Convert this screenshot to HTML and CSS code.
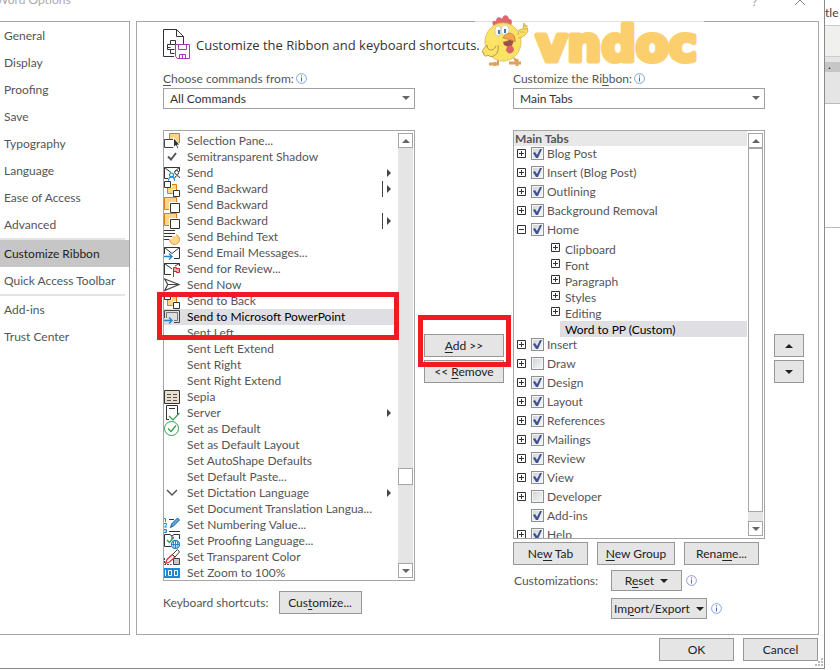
FILE: index.html
```html
<!DOCTYPE html>
<html lang="en">
<head>
<meta charset="utf-8">
<title>Word Options</title>
<link rel="stylesheet" href="styles.css">
</head>
<body>
<svg class="defs" aria-hidden="true">
  <symbol id="info" viewBox="0 0 11 11"><circle cx="5.500" cy="5.500" r="4.900" fill="#fff" stroke="#7fa3dc"/><path d="M5.500 4.500v4M5.500 2.300v1.200" stroke="#3f6fbf" fill="none"/></symbol>
  <symbol id="down" viewBox="0 0 8 4"><path d="M0 0h8L4 4z" fill="currentColor"/></symbol>
  <symbol id="up" viewBox="0 0 8 4"><path d="M0 4h8L4 0z" fill="currentColor"/></symbol>
  <symbol id="plus" viewBox="0 0 9 9"><path d="M.5.5h8v8h-8zM2 4.500h5M4.500 2v5" fill="#fff" stroke="#333"/></symbol>
  <symbol id="minus" viewBox="0 0 9 9"><path d="M.5.5h8v8h-8zM2 4.500h5" fill="#fff" stroke="#333"/></symbol>
  <symbol id="i-pane" viewBox="0 0 16 16"><path d="M5.500.5h10v9h-10z" fill="#fbd58c" stroke="#e07b12"/><path d="M.5 6.500h9v8h-9z" fill="#fff" stroke="#444"/><path d="M9.500 4.500v10l2.300-2 1.500 3.200 1.500-.7-1.400-3h2.600z" fill="#333" stroke="#fff"/></symbol>
  <symbol id="i-check" viewBox="0 0 16 16"><path d="M4 7.500l3 3L12 4" fill="none" stroke="#555" stroke-width="2"/></symbol>
  <symbol id="i-send" viewBox="0 0 16 16"><path d="M4 13.500H.5v-11h15v4M.5 2.500L7 7.500M15.500 2.500l-5 4" fill="none" stroke="#333"/><circle cx="12.700" cy="7.500" r="2" fill="#fff" stroke="#333"/><path d="M11 13c0-3 4.500-3 4.500 0" fill="none" stroke="#333"/><circle cx="7.500" cy="10" r="2" fill="#fff" stroke="#1e88d2" stroke-width="1.200"/><path d="M4.500 15.700c0-5 6-5 6 0" fill="none" stroke="#1e88d2" stroke-width="1.200"/></symbol>
  <symbol id="i-back4" viewBox="0 0 16 16"><path d="M4 7h5v5H4zM8 4h4v4H8z" fill="#fbd58c"/><path d="M3.500 7v5.500h5M8 3.500h4.500V9" stroke="#e07b12" fill="none"/><path d="M.5.5h6v6h-6zM9.500 9.500h6v6h-6z" fill="#fff" stroke="#333"/></symbol>
  <symbol id="i-back" viewBox="0 0 16 16"><path d="M.5.500h12v12H.5z" fill="#fbd58c" stroke="#e07b12"/><path d="M5 5h11v11H5z" fill="#fff"/><path d="M6.500 6.500h9v9h-9z" fill="#fff" stroke="#333"/></symbol>
  <symbol id="i-behind" viewBox="0 0 16 16"><circle cx="10.500" cy="10.500" r="5" fill="#fbd58c" stroke="#e69a3d"/><path d="M0 0h12v7H0zM0 7h8v3H0z" fill="#fff"/><path d="M0 1.500h11M0 4.500h11M0 7.500h8M0 10.500h5" stroke="#333"/></symbol>
  <symbol id="i-mail" viewBox="0 0 16 16"><path d="M.5 9V2.500h15v11H10M.5 2.500L8 8.500l7.500-6" fill="none" stroke="#333"/><path d="M0 11.500h8M5 8.500l3 3-3 3" fill="none" stroke="#1e88d2" stroke-width="1.400"/></symbol>
  <symbol id="i-flag" viewBox="0 0 16 16"><path d="M7 13.500H.5v-11h15V5M.5 2.500L8 8M15.500 2.500L11 5" fill="none" stroke="#333"/><path d="M9.500 16V6.500h3v1h3v4h-3v-1h-3" fill="#f4a6a6" stroke="#d0222a"/></symbol>
  <symbol id="i-now" viewBox="0 0 16 16"><path d="M.7 2l14.500 5.500L.7 13.500l3-6zM3.700 7.500h11" fill="none" stroke="#444" stroke-width="1.200"/></symbol>
  <symbol id="i-ppt" viewBox="0 0 16 16"><path d="M.5 9V1.500h15v12H10" fill="none" stroke="#444"/><path d="M2.500 9V3.500h11v8H10" fill="none" stroke="#777"/><path d="M0 11.500h8M5 8.500l3 3-3 3" fill="none" stroke="#1e88d2" stroke-width="1.400"/></symbol>
  <symbol id="i-sepia" viewBox="0 0 16 16"><path d="M.5 1.500h15v13H.5z" fill="#eadfce" stroke="#333"/><path d="M3 5.500h4M9 5.500h4M3 8.500h4M9 8.500h4M3 11.500h4M9 11.500h4" stroke="#555"/></symbol>
  <symbol id="i-server" viewBox="0 0 16 16"><path d="M5 14.500H2.500V.5h11v9M5 3.500h6" fill="none" stroke="#333"/><path d="M5 11l4 4 6.500-7" fill="none" stroke="#2f9e4f" stroke-width="1.200"/></symbol>
  <symbol id="i-default" viewBox="0 0 16 16"><circle cx="7.500" cy="7.500" r="7" fill="#fff" stroke="#2f9e4f"/><path d="M4 7.500l3 3 5-6" fill="none" stroke="#2f9e4f" stroke-width="1.200"/></symbol>
  <symbol id="i-chev" viewBox="0 0 16 16"><path d="M3 5l5 5 5-5" fill="none" stroke="#555" stroke-width="1.500"/></symbol>
  <symbol id="i-num" viewBox="0 0 16 16"><path d="M0 1.500h1.500V5M0 6.500h2.500v1.500L.5 10H3M0 12.500h2.500v3H0M.5 14h2" stroke="#1e88d2" fill="none"/><path d="M5 2.500h5M5 14.500h11" stroke="#333"/><path d="M6.500 10.500l1-3.500 6-6 2 2-6 6z" fill="#5aa7e0" stroke="#1e5f9e"/></symbol>
  <symbol id="i-proof" viewBox="0 0 16 16"><path d="M7 13.500H.5v-12H6L8 3l2-1.500h5.500V6M8 3v3" fill="none" stroke="#333"/><path d="M3 7l2.500 2.500L10 4" fill="none" stroke="#2f9e4f" stroke-width="1.300"/><circle cx="11.500" cy="11.500" r="4" fill="#fff" stroke="#1e88d2" stroke-width="1.300"/><path d="M7.500 11.500h8M11.500 7.500v8M9.500 8.500c0 2 0 4 .5 6M13.500 8.500c0 2 0 4-.5 6" stroke="#1e88d2" fill="none"/></symbol>
  <symbol id="i-trans" viewBox="0 0 16 16"><path d="M9.500 9.500h6v6h-6z" fill="#c8c8c8" stroke="#444"/><path d="M.5 9v6.500h7" fill="none" stroke="#444" stroke-dasharray="2 1"/><path d="M1.500 14.500l1.500-4 5.500-5 2.500 2.500-5.500 5z" fill="#fff" stroke="#e0393f" stroke-width="1.300"/><path d="M8.500 5.500L13.500.5l2 2.500L11 8z" fill="#fff" stroke="#444"/></symbol>
  <symbol id="i-100" viewBox="0 0 16 16"><path d="M0 3h16v10H0z" fill="#1e88d2"/><path d="M1.500 5v6M4.500 5.500h3v5h-3zM10.500 5.500h3v5h-3z" fill="none" stroke="#fff"/></symbol>
</svg>

<div class="desktop">
<main class="dialog">
  <header class="titlebar"><h1>Word Options</h1><button class="caption" type="button" aria-label="Help">?</button><button class="caption" type="button" aria-label="Close"><svg width="12" height="12" viewBox="0 0 12 12"><path d="M1 1l10 10M11 1L1 11" stroke="#888" fill="none"/></svg></button></header>
  <div class="content">
    <nav class="sidebar">
      <a href="#">General</a><a href="#">Display</a><a href="#">Proofing</a><a href="#">Save</a><a href="#">Typography</a><a href="#">Language</a><a href="#">Ease of Access</a><a href="#">Advanced</a>
      <hr>
      <a href="#" class="current">Customize Ribbon</a><a href="#">Quick Access Toolbar</a>
      <hr>
      <a href="#">Add-ins</a><a href="#">Trust Center</a>
    </nav>
    <section class="panel">
      <svg class="watermark" width="229" height="52" viewBox="0 0 229 52" role="img" aria-label="vndoc">
        <path d="M0 0h229v52H0z" fill="#fff" opacity=".65"/>
        <g transform="translate(6 2)">
        <path d="M14 11c-5-4-2-7 1-6 0-4 4-5 6-2 1-5 6-5 7 0 4 0 3 4 2 7z" fill="#e0676c"/>
        <path d="M17 44v5M33 42l3 5" stroke="#d99a55" stroke-width="2"/>
        <path d="M8 48h10M28 47h12M36 43v7M14 46v4" stroke="#dfa15f" stroke-width="3"/>
        <ellipse cx="22" cy="26" rx="18" ry="19" fill="#fbe366" stroke="#e3c45c"/>
        <path d="M37 22c4 0 8-3 10-7l-1-3-3-5-1 6-4 1-1 5" fill="#fbe366" stroke="#d9ae4d"/>
        <path d="M42 10h5M42 13h5M39 16h5" stroke="#d9ae4d"/>
        <path d="M6 29c-5 5-6 8-3 8-1 3 2 4 4 2 3 4 12 0 10-10M6 29c0 6 6 7 9 1" fill="#fbe366" stroke="#b99543"/>
        <ellipse cx="17" cy="15" rx="3" ry="5" fill="#fff" stroke="#ccc"/><ellipse cx="24" cy="14" rx="4" ry="5" fill="#fff" stroke="#ccc"/><path d="M18 14v4M24 13v4" stroke="#477b96" stroke-width="2"/>
        <path d="M22 26c4-1 8-2 11-5-1 10-3 12-10 8z" fill="#9e5148"/><path d="M26 31c3-3 7-1 7 3-2 5-7 4-8 0z" fill="#dc6468"/>
        <path d="M22 22c3-7 13-7 12 4-3-2-7-3-12-4z" fill="#f3a64b" stroke="#c98945"/>
        </g>
        <text class="wordmark" x="61" y="47">vndoc</text>
      </svg>
      <div class="heading">
        <svg width="27" height="31" viewBox="0 0 27 31"><path d="M11 27.500H.5V.5h13l7 7V15M13.500.5v7h7" fill="#fff" stroke="#333"/><path d="M12.500 11.500h-5v4h-3v5h3v4h4M7.500 15.500h6M7.500 20.500h4M7.500 18.500h-3M12.500 11.500v4" fill="none" stroke="#333"/><path d="M12.500 15.500h14v14h-12l-2-2z" fill="#fff" stroke="#a63ab8"/><path d="M15.500 15.500v5h8v-5M16.500 29.500v-4h6v4M19.500 26v3" fill="none" stroke="#a63ab8"/></svg>
        <h2>Customize the Ribbon and keyboard shortcuts.</h2>
      </div>
      <div class="columns">
        <div class="column">
          <label for="commands"><u>C</u>hoose commands from:<svg class="info"><use href="#info"/></svg></label>
          <div class="select"><select id="commands"><option>All Commands</option></select><svg class="arrow"><use href="#down"/></svg></div>
          <div class="list commands">
            <ul>
              <li><svg><use href="#i-pane"/></svg>Selection Pane...</li>
              <li><svg><use href="#i-check"/></svg>Semitransparent Shadow</li>
              <li class="more"><svg><use href="#i-send"/></svg>Send</li>
              <li class="more split"><svg><use href="#i-back4"/></svg>Send Backward</li>
              <li><svg><use href="#i-back"/></svg>Send Backward</li>
              <li class="more split"><svg><use href="#i-back"/></svg>Send Backward</li>
              <li><svg><use href="#i-behind"/></svg>Send Behind Text</li>
              <li><svg><use href="#i-mail"/></svg>Send Email Messages...</li>
              <li><svg><use href="#i-flag"/></svg>Send for Review...</li>
              <li><svg><use href="#i-now"/></svg>Send Now</li>
              <li><svg><use href="#i-back4"/></svg>Send to Back</li>
              <li class="selected"><svg><use href="#i-ppt"/></svg>Send to Microsoft PowerPoint</li>
              <li><svg></svg>Sent Left</li>
              <li><svg></svg>Sent Left Extend</li>
              <li><svg></svg>Sent Right</li>
              <li><svg></svg>Sent Right Extend</li>
              <li><svg><use href="#i-sepia"/></svg>Sepia</li>
              <li class="more"><svg><use href="#i-server"/></svg>Server</li>
              <li><svg><use href="#i-default"/></svg>Set as Default</li>
              <li><svg></svg>Set as Default Layout</li>
              <li><svg></svg>Set AutoShape Defaults</li>
              <li><svg></svg>Set Default Paste...</li>
              <li class="more"><svg><use href="#i-chev"/></svg>Set Dictation Language</li>
              <li><svg></svg>Set Document Translation Langua...</li>
              <li><svg><use href="#i-num"/></svg>Set Numbering Value...</li>
              <li><svg><use href="#i-proof"/></svg>Set Proofing Language...</li>
              <li><svg><use href="#i-trans"/></svg>Set Transparent Color</li>
              <li><svg><use href="#i-100"/></svg>Set Zoom to 100%</li>
            </ul>
            <div class="scrollbar"><button type="button" aria-label="Scroll commands up"><svg class="arrow"><use href="#up"/></svg></button><div class="before"></div><div class="thumb"></div><div class="after"></div><button type="button" aria-label="Scroll commands down"><svg class="arrow"><use href="#down"/></svg></button></div>
          </div>
          <div class="shortcuts"><span>Keyboard shortcuts:</span><button type="button">Cus<u>t</u>omize...</button></div>
          <div class="mark mark-command"></div>
        </div>
        <div class="transfer">
          <button type="button"><u>A</u>dd &gt;&gt;</button>
          <button type="button">&lt;&lt; <u>R</u>emove</button>
          <div class="mark mark-add"></div>
        </div>
        <div class="column">
          <label for="tabs">Customize the Ri<u>b</u>bon:<svg class="info"><use href="#info"/></svg></label>
          <div class="select"><select id="tabs"><option>Main Tabs</option></select><svg class="arrow"><use href="#down"/></svg></div>
          <div class="list tabs">
            <div class="tree">
              <h3>Main Tabs</h3>
              <div class="row"><svg><use href="#plus"/></svg><label><input type="checkbox" checked>Blog Post</label></div>
              <div class="row"><svg><use href="#plus"/></svg><label><input type="checkbox" checked>Insert (Blog Post)</label></div>
              <div class="row"><svg><use href="#plus"/></svg><label><input type="checkbox" checked>Outlining</label></div>
              <div class="row"><svg><use href="#plus"/></svg><label><input type="checkbox" checked>Background Removal</label></div>
              <div class="row"><svg><use href="#minus"/></svg><label><input type="checkbox" checked>Home</label></div>
              <ul class="groups">
                <li><svg><use href="#plus"/></svg><span>Clipboard</span></li>
                <li><svg><use href="#plus"/></svg><span>Font</span></li>
                <li><svg><use href="#plus"/></svg><span>Paragraph</span></li>
                <li><svg><use href="#plus"/></svg><span>Styles</span></li>
                <li><svg><use href="#plus"/></svg><span>Editing</span></li>
                <li class="chosen"><svg></svg><span>Word to PP (Custom)</span></li>
              </ul>
              <div class="row"><svg><use href="#plus"/></svg><label><input type="checkbox" checked>Insert</label></div>
              <div class="row"><svg><use href="#plus"/></svg><label><input type="checkbox">Draw</label></div>
              <div class="row"><svg><use href="#plus"/></svg><label><input type="checkbox" checked>Design</label></div>
              <div class="row"><svg><use href="#plus"/></svg><label><input type="checkbox" checked>Layout</label></div>
              <div class="row"><svg><use href="#plus"/></svg><label><input type="checkbox" checked>References</label></div>
              <div class="row"><svg><use href="#plus"/></svg><label><input type="checkbox" checked>Mailings</label></div>
              <div class="row"><svg><use href="#plus"/></svg><label><input type="checkbox" checked>Review</label></div>
              <div class="row"><svg><use href="#plus"/></svg><label><input type="checkbox" checked>View</label></div>
              <div class="row"><svg><use href="#plus"/></svg><label><input type="checkbox">Developer</label></div>
              <div class="row"><svg></svg><label><input type="checkbox" checked>Add-ins</label></div>
              <div class="row"><svg><use href="#plus"/></svg><label><input type="checkbox" checked>Help</label></div>
            </div>
            <div class="scrollbar"><button type="button" aria-label="Scroll tabs up"><svg class="arrow"><use href="#up"/></svg></button><div class="thumb long"></div><div class="rest"></div><button type="button" aria-label="Scroll tabs down"><svg class="arrow"><use href="#down"/></svg></button></div>
          </div>
          <div class="tab-actions"><button type="button">Ne<u>w</u> Tab</button><button type="button"><u>N</u>ew Group</button><button type="button">Rena<u>m</u>e...</button></div>
          <div class="customizations">
            <span>Customizations:</span>
            <div class="drop"><button type="button"><span>R<u>e</u>set</span><svg class="arrow"><use href="#down"/></svg></button><svg class="info"><use href="#info"/></svg></div>
            <div class="drop second"><button type="button"><span>Im<u>p</u>ort/Export</span><svg class="arrow"><use href="#down"/></svg></button><svg class="info"><use href="#info"/></svg></div>
          </div>
        </div>
        <div class="reorder">
          <button type="button" aria-label="Move up"><svg class="arrow"><use href="#up"/></svg></button>
          <button type="button" aria-label="Move down"><svg class="arrow"><use href="#down"/></svg></button>
        </div>
      </div>
    </section>
  </div>
  <footer class="footer"><button type="button">OK</button><button type="button">Cancel</button>
    <svg class="grip" width="9" height="9" viewBox="0 0 9 9"><path d="M7 0h2v2H7zM7 3h2v2H7zM7 6h2v2H7zM4 3h2v2H4zM4 6h2v2H4zM1 6h2v2H1z" fill="#bbb"/></svg>
  </footer>
</main>
<aside class="document">
  <div class="style-name">tle</div>
  <div class="ribbon"></div>
  <div class="gap"></div>
  <div class="ruler">.</div>
  <div class="gray"></div>
  <div class="page"></div>
</aside>
</div>
</body>
</html>
```
FILE: styles.css
```css
* { box-sizing: border-box; }

body {
  margin: 0;
  background: #fff;
  color: #555;
  font: 12px/16px Lato, "Open Sans", sans-serif;
  overflow: hidden;
}

h1, h2, h3, ul { margin: 0; padding: 0; font: inherit; list-style: none; }
svg { display: block; flex: none; }
u { text-underline-offset: 2px; }
button, select, input { margin: 0; font: inherit; }
.defs { position: absolute; width: 0; height: 0; }
.arrow { width: 8px; height: 4px; color: #666; }
.info { width: 11px; height: 11px; }

button {
  height: 23px;
  padding: 0 4px;
  border: 1px solid #979797;
  border-radius: 0;
  background: #e5e5e5;
  color: #222;
  white-space: nowrap;
}

.desktop { display: flex; height: 100vh; }
.dialog {
  display: flex;
  flex: 1;
  flex-direction: column;
  min-width: 0;
  margin-bottom: 1px;
  border: solid #8a8a8a;
  border-width: 0 1px 1px 0;
}

.titlebar { display: flex; height: 21px; padding-right: 18px; color: #aaa; }
.titlebar h1 { flex: 1; margin-top: -8px; text-indent: -4px; }
.caption { display: flex; height: 12px; margin-top: -6px; padding: 0; border: 0; background: none; color: #999; }
.caption + .caption { margin-left: 37px; }

.content { display: flex; flex: 1; gap: 6px; padding-right: 5px; }
.sidebar { width: 130px; border: solid #a6a6a6; border-width: 1px 1px 1px 0; }
.sidebar a { display: block; padding: 0 4px; color: inherit; line-height: 27px; text-decoration: none; white-space: nowrap; }
.sidebar .current { background: #c6c6c6; color: #222; }
.sidebar hr { height: 2px; margin: 0 4px 0 0; border: 0; background: #e4e4e4; }

.panel { position: relative; flex: 1; min-width: 0; padding: 7px 14px 0 26px; border: 1px solid #a6a6a6; }
.heading { position: relative; display: flex; align-items: center; gap: 6px; height: 31px; color: #333; font-family: "Open Sans", sans-serif; font-size: 13px; white-space: nowrap; }
.watermark { position: absolute; top: -8px; left: 338px; }
.wordmark { fill: #fbcf6d; stroke: #fbcf6d; stroke-width: 5px; stroke-linejoin: round; font: bold 48px "DejaVu Sans", sans-serif; }

.columns { display: grid; grid-template-columns: 1fr 80px 1fr 30px; gap: 9px; margin-top: 9px; }
.column { position: relative; min-width: 0; }
.column > label { position: relative; display: flex; align-items: center; height: 19px; line-height: 16px; white-space: pre; }
.column > label .info { margin-left: 2px; }
.select { position: relative; height: 21px; }
.select select { width: 100%; height: 100%; padding: 0 6px; border: 1px solid #a0a0a0; border-radius: 0; background: #fff; color: #333; appearance: none; }
.select .arrow { position: absolute; top: 8px; right: 5px; pointer-events: none; }

.list { display: flex; margin-top: 21px; border: 1px solid #a6a6a6; background: #fff; overflow: hidden; }
.list ul, .tree { flex: 1; min-width: 0; }
.commands { height: 451px; padding-top: 2px; }
.commands li { display: flex; align-items: center; gap: 7px; height: 16px; white-space: nowrap; }
.commands li svg { width: 16px; height: 16px; }
.commands .selected { background: #dfdee3; color: #000; }
.more::after { content: ""; width: 9px; height: 8px; margin: 0 7px 0 auto; background: #444; clip-path: polygon(5px 0, 9px 4px, 5px 8px); }
.split::after { height: 16px; clip-path: polygon(0 0, 1px 0, 1px 16px, 5px 16px, 5px 4px, 9px 8px, 5px 12px, 5px 16px, 0 16px); }

.scrollbar { display: flex; flex-direction: column; width: 15px; margin-right: 1px; background: #e5e5e5; }
.scrollbar button { display: grid; place-items: center; width: 15px; height: 15px; padding: 0; border-color: #a6a6a6; background: #fff; }
.thumb { height: 17px; border: 1px solid #a6a6a6; background: #fff; }
.before { flex: 321; }
.after { flex: 78; }
.commands .scrollbar { margin-bottom: 2px; }
.tabs .scrollbar { margin: 2px 1px 2px 1px; }
.long { flex: 1; }
.rest { height: 9px; }

.shortcuts { display: flex; align-items: center; gap: 10px; margin-top: 10px; white-space: nowrap; }
.shortcuts button { width: 83px; }

.tabs { height: 409px; }
.tree h3 { height: 15px; margin-bottom: -2px; padding-left: 1px; background: #e8e8e8; font-weight: bold; line-height: 15px; }
.row { display: flex; align-items: center; height: 19px; padding-left: 3px; }
.row svg { width: 9px; height: 9px; margin-right: 5px; }
.row label { display: flex; align-items: center; gap: 3px; white-space: nowrap; }
.row input {
  display: grid;
  place-items: center;
  width: 13px;
  height: 13px;
  border: 1px solid #8e8f8f;
  background: linear-gradient(135deg, #cfd2d6, #f8f8f8);
  box-shadow: inset 0 0 0 1px #f4f4f4;
  appearance: none;
}
.row input:checked::before { content: ""; width: 9px; height: 9px; background: #3e5296; clip-path: polygon(0 4px, 2px 3px, 4px 6px, 7px 0, 9px 0, 5px 9px, 3px 9px); }
.list .groups { margin: 2px 0 -2px 37px; }
.groups li { display: flex; height: 16px; }
.groups svg { width: 9px; height: 9px; margin-top: 2px; }
.groups span { flex: 1; padding-left: 5px; line-height: 18px; white-space: nowrap; }
.chosen span { background: #dfdee3; color: #000; }

.tab-actions { display: flex; gap: 9px; margin-top: 3px; }
.tab-actions button { width: 75px; }
.tab-actions button:nth-child(2) { width: 78px; }
.customizations { display: grid; grid-template-columns: 98px 1fr; align-items: center; row-gap: 7px; margin-top: 5px; }
.customizations > span { padding-left: 1px; }
.drop { display: flex; align-items: center; gap: 4px; }
.drop.second { grid-column: 2; }
.drop button { display: flex; align-items: center; justify-content: center; gap: 6px; width: 71px; height: 21px; }
.drop.second button { width: 96px; padding: 0 2px; }
.drop button .arrow { color: #222; }

.transfer, .reorder { position: relative; display: flex; flex-direction: column; gap: 3px; margin-top: 265px; }
.reorder button { display: grid; place-items: center; }
.reorder .arrow { color: #222; }

.mark { position: absolute; border: 5px solid #ed1c24; pointer-events: none; }
.mark-command { top: 223px; left: -6px; right: 16px; height: 48px; }
.mark-add { top: -19px; left: -6px; right: -7px; height: 52px; }

.footer { position: relative; display: flex; justify-content: flex-end; gap: 9px; padding: 3px 6px 7px; }
.footer button { width: 75px; }
.grip { position: absolute; right: 1px; bottom: 1px; }

.document { display: flex; flex-direction: column; width: 15px; color: #444; }
.style-name { height: 25px; padding-top: 5px; }
.ribbon { height: 32px; border: solid #ccc; border-width: 1px 0; background: #f0f0ef; }
.gap { height: 5px; background: #e5e5e5; }
.ruler { height: 10px; padding-left: 3px; background: #c6c6c6; color: #222; line-height: 6px; }
.gray { height: 32px; border-bottom: 1px solid #bbb; background: #e5e5e5; }
.page { height: 124px; border-bottom: 1px solid #bbb; }
```
